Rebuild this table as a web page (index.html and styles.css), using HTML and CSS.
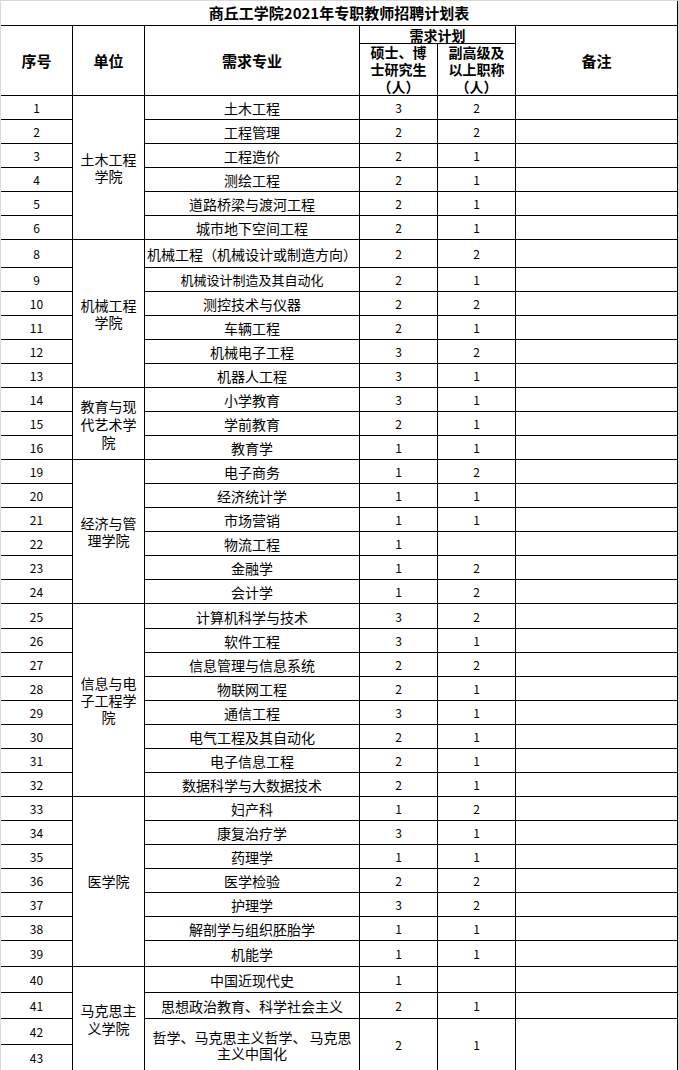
FILE: index.html
```html
<!DOCTYPE html>
<html lang="zh-CN">
<head>
<meta charset="utf-8">
<title>商丘工学院2021年专职教师招聘计划表</title>
<link rel="stylesheet" href="styles.css">
</head>
<body>
<table class="plan">
  <colgroup>
    <col class="c-no">
    <col class="c-unit">
    <col class="c-major">
    <col class="c-num">
    <col class="c-num">
    <col class="c-note">
  </colgroup>
  <thead>
    <tr class="r-title"><th colspan="6" class="title">商丘工学院2021年专职教师招聘计划表</th></tr>
    <tr class="r-h1">
      <th rowspan="2">序号</th>
      <th rowspan="2">单位</th>
      <th rowspan="2">需求专业</th>
      <th colspan="2" class="plan-h">需求计划</th>
      <th rowspan="2">备注</th>
    </tr>
    <tr class="r-h2">
      <th class="sub"><span class="ln">硕士、博</span><span class="ln">士研究生</span><span class="ln">（人）</span></th>
      <th class="sub"><span class="ln">副高级及</span><span class="ln">以上职称</span><span class="ln">（人）</span></th>
    </tr>
  </thead>
  <tbody>
    <tr><td class="n">1</td><td rowspan="6" class="unit">土木工程学院</td><td class="m">土木工程</td><td class="n">3</td><td class="n">2</td><td></td></tr>
    <tr><td class="n">2</td><td class="m">工程管理</td><td class="n">2</td><td class="n">2</td><td></td></tr>
    <tr><td class="n">3</td><td class="m">工程造价</td><td class="n">2</td><td class="n">1</td><td></td></tr>
    <tr><td class="n">4</td><td class="m">测绘工程</td><td class="n">2</td><td class="n">1</td><td></td></tr>
    <tr><td class="n">5</td><td class="m">道路桥梁与渡河工程</td><td class="n">2</td><td class="n">1</td><td></td></tr>
    <tr><td class="n">6</td><td class="m">城市地下空间工程</td><td class="n">2</td><td class="n">1</td><td></td></tr>

    <tr class="r28"><td class="n">8</td><td rowspan="6" class="unit">机械工程学院</td><td class="m nowrap">机械工程（机械设计或制造方向）</td><td class="n">2</td><td class="n">2</td><td></td></tr>
    <tr><td class="n">9</td><td class="m small">机械设计制造及其自动化</td><td class="n">2</td><td class="n">1</td><td></td></tr>
    <tr><td class="n">10</td><td class="m">测控技术与仪器</td><td class="n">2</td><td class="n">2</td><td></td></tr>
    <tr><td class="n">11</td><td class="m">车辆工程</td><td class="n">2</td><td class="n">1</td><td></td></tr>
    <tr><td class="n">12</td><td class="m">机械电子工程</td><td class="n">3</td><td class="n">2</td><td></td></tr>
    <tr><td class="n">13</td><td class="m">机器人工程</td><td class="n">3</td><td class="n">1</td><td></td></tr>

    <tr><td class="n">14</td><td rowspan="3" class="unit loose">教育与现代艺术学院</td><td class="m">小学教育</td><td class="n">3</td><td class="n">1</td><td></td></tr>
    <tr><td class="n">15</td><td class="m">学前教育</td><td class="n">2</td><td class="n">1</td><td></td></tr>
    <tr><td class="n">16</td><td class="m">教育学</td><td class="n">1</td><td class="n">1</td><td></td></tr>

    <tr><td class="n">19</td><td rowspan="6" class="unit">经济与管理学院</td><td class="m">电子商务</td><td class="n">1</td><td class="n">2</td><td></td></tr>
    <tr><td class="n">20</td><td class="m">经济统计学</td><td class="n">1</td><td class="n">1</td><td></td></tr>
    <tr><td class="n">21</td><td class="m">市场营销</td><td class="n">1</td><td class="n">1</td><td></td></tr>
    <tr><td class="n">22</td><td class="m">物流工程</td><td class="n">1</td><td class="n"></td><td></td></tr>
    <tr><td class="n">23</td><td class="m">金融学</td><td class="n">1</td><td class="n">2</td><td></td></tr>
    <tr><td class="n">24</td><td class="m">会计学</td><td class="n">1</td><td class="n">2</td><td></td></tr>

    <tr class="r25"><td class="n">25</td><td rowspan="8" class="unit">信息与电子工程学院</td><td class="m">计算机科学与技术</td><td class="n">3</td><td class="n">2</td><td></td></tr>
    <tr><td class="n">26</td><td class="m">软件工程</td><td class="n">3</td><td class="n">1</td><td></td></tr>
    <tr><td class="n">27</td><td class="m">信息管理与信息系统</td><td class="n">2</td><td class="n">2</td><td></td></tr>
    <tr><td class="n">28</td><td class="m">物联网工程</td><td class="n">2</td><td class="n">1</td><td></td></tr>
    <tr><td class="n">29</td><td class="m">通信工程</td><td class="n">3</td><td class="n">1</td><td></td></tr>
    <tr><td class="n">30</td><td class="m">电气工程及其自动化</td><td class="n">2</td><td class="n">1</td><td></td></tr>
    <tr><td class="n">31</td><td class="m">电子信息工程</td><td class="n">2</td><td class="n">1</td><td></td></tr>
    <tr><td class="n">32</td><td class="m">数据科学与大数据技术</td><td class="n">2</td><td class="n">1</td><td></td></tr>

    <tr><td class="n">33</td><td rowspan="7" class="unit">医学院</td><td class="m">妇产科</td><td class="n">1</td><td class="n">2</td><td></td></tr>
    <tr><td class="n">34</td><td class="m">康复治疗学</td><td class="n">3</td><td class="n">1</td><td></td></tr>
    <tr><td class="n">35</td><td class="m">药理学</td><td class="n">1</td><td class="n">1</td><td></td></tr>
    <tr><td class="n">36</td><td class="m">医学检验</td><td class="n">2</td><td class="n">2</td><td></td></tr>
    <tr><td class="n">37</td><td class="m">护理学</td><td class="n">3</td><td class="n">2</td><td></td></tr>
    <tr><td class="n">38</td><td class="m">解剖学与组织胚胎学</td><td class="n">1</td><td class="n">1</td><td></td></tr>
    <tr class="r26"><td class="n">39</td><td class="m">机能学</td><td class="n">1</td><td class="n">1</td><td></td></tr>

    <tr class="r26"><td class="n">40</td><td rowspan="4" class="unit loose">马克思主义学院</td><td class="m">中国近现代史</td><td class="n">1</td><td class="n"></td><td></td></tr>
    <tr class="r26"><td class="n">41</td><td class="m">思想政治教育、科学社会主义</td><td class="n">2</td><td class="n">1</td><td></td></tr>
    <tr class="r26"><td class="n">42</td><td rowspan="2" class="m multi">哲学、马克思主义哲学、 马克思主义中国化</td><td rowspan="2" class="n">2</td><td rowspan="2" class="n">1</td><td rowspan="2"></td></tr>
    <tr class="r26"><td class="n">43</td></tr>
  </tbody>
</table>
</body>
</html>
```

FILE: styles.css
```css
html, body {
  margin: 0;
  padding: 0;
  background: #d9d9d9;
}

body {
  padding: 1px 0 0 1px;
  font-family: "Noto Sans CJK SC", "Liberation Sans", sans-serif;
  color: #000;
}

.plan {
  width: 677px;
  table-layout: fixed;
  border-collapse: separate;
  border-spacing: 0;
  background: #fff;
}

.c-no { width: 72px; }
.c-unit { width: 72px; }
.c-major { width: 215px; }
.c-num { width: 78px; }
.c-note { width: 162px; }

.plan th,
.plan td {
  box-sizing: border-box;
  border-right: 1px solid #000;
  border-bottom: 1px solid #000;
  padding: 0 2px;
  text-align: center;
  vertical-align: middle;
  font-size: 14px;
  line-height: 16px;
}

.plan th {
  font-weight: bold;
  font-size: 15px;
}

.r-title { height: 25px; }
.r-h1 { height: 18px; }
.r-h2 { height: 51px; }

.plan .title {
  font-size: 15px;
  line-height: 18px;
}

.plan .plan-h {
  font-size: 14px;
  line-height: 16px;
  padding: 0;
}

.plan .sub {
  padding: 0;
  font-size: 14px;
  line-height: 17px;
}

.plan .sub .ln {
  display: block;
  height: 17px;
  white-space: nowrap;
}

.plan tbody tr { height: 24px; }
.plan tbody tr.r28 { height: 28px; }
.plan tbody tr.r25 { height: 25px; }
.plan tbody tr.r26 { height: 26px; }

.plan .n {
  font-size: 12px;
  line-height: 14px;
  padding-top: 1px;
}

.plan .unit {
  padding: 0 6px;
  line-height: 17px;
}

.plan .unit.loose {
  line-height: 18px;
}

.plan .m {
  padding: 1px 1px 0;
}

.plan .nowrap { white-space: nowrap; }

.plan .small { font-size: 13px; }

.plan .multi { line-height: 16px; }
```
